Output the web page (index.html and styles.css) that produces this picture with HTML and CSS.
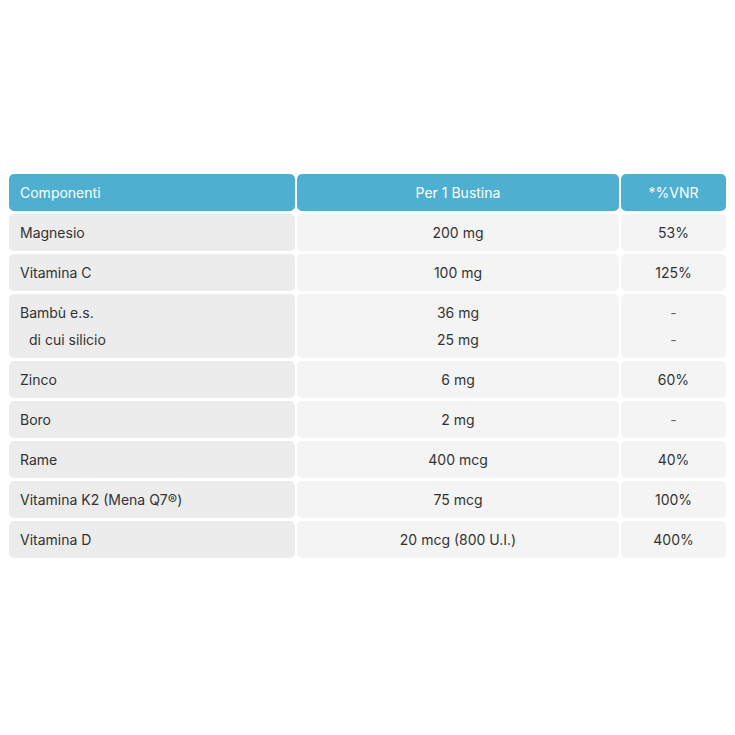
FILE: index.html
```html
<!DOCTYPE html>
<html lang="it">
<head>
<meta charset="utf-8">
<link rel="stylesheet" href="styles.css">
</head>
<body>
<div class="table">
  <div class="cell head left">Componenti</div>
  <div class="cell head">Per 1 Bustina</div>
  <div class="cell head">*%VNR</div>

  <div class="cell name">Magnesio</div>
  <div class="cell val">200 mg</div>
  <div class="cell val">53%</div>

  <div class="cell name">Vitamina C</div>
  <div class="cell val">100 mg</div>
  <div class="cell val">125%</div>

  <div class="cell name"><div>Bambù e.s.</div><div class="sub">di cui silicio</div></div>
  <div class="cell val"><div>36 mg</div><div>25 mg</div></div>
  <div class="cell val"><div class="dash">-</div><div class="dash">-</div></div>

  <div class="cell name">Zinco</div>
  <div class="cell val">6 mg</div>
  <div class="cell val">60%</div>

  <div class="cell name">Boro</div>
  <div class="cell val">2 mg</div>
  <div class="cell val"><span class="dash">-</span></div>

  <div class="cell name">Rame</div>
  <div class="cell val">400 mcg</div>
  <div class="cell val">40%</div>

  <div class="cell name">Vitamina K2 (Mena Q7®)</div>
  <div class="cell val">75 mcg</div>
  <div class="cell val">100%</div>

  <div class="cell name">Vitamina D</div>
  <div class="cell val">20 mcg (800 U.I.)</div>
  <div class="cell val">400%</div>
</div>
</body>
</html>
```
FILE: styles.css
```css
html, body {
  margin: 0;
  padding: 0;
  background: #ffffff;
}
body {
  padding: 174px 9px 0 9px;
  font-family: "Inter", "Liberation Sans", sans-serif;
  font-size: 14px;
  color: #333333;
}
.table {
  display: grid;
  grid-template-columns: 286px 322px 105px;
  column-gap: 2px;
  row-gap: 3px;
}
.cell {
  padding: 5px 11px;
  line-height: 27px;
  border-radius: 5px;
  background: #f4f4f4;
  text-align: center;
}
.head {
  background: #4eafd0;
  color: #ffffff;
}
.head.left {
  text-align: left;
}
.name {
  background: #ececec;
  text-align: left;
}
.sub {
  padding-left: 9px;
}
.dash {
  color: #666666;
}
```
